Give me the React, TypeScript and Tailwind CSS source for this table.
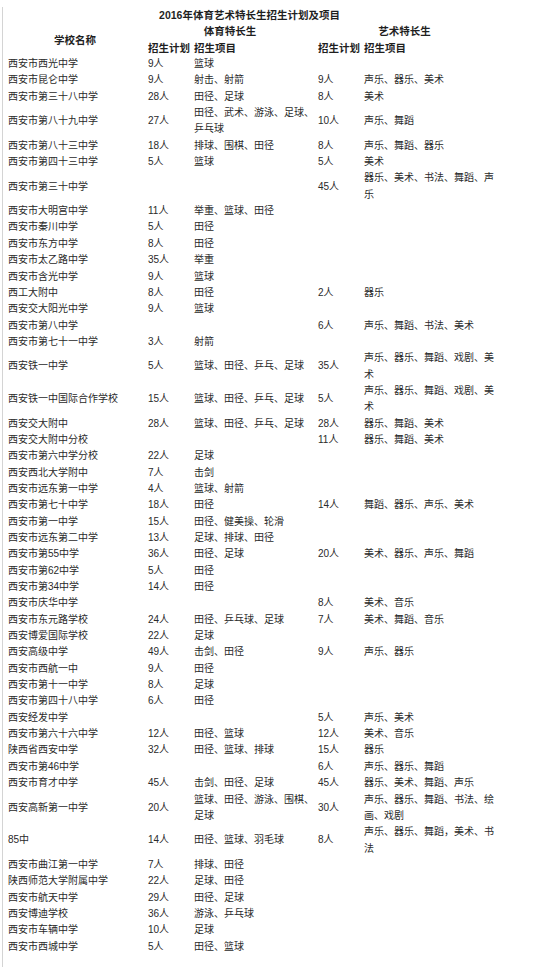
type Row = [string, string, string, string, string];

// 学校名称 | 体育计划 | 体育项目 | 艺术计划 | 艺术项目  ("\n" = forced wrap)
const rows: Row[] = [
  ['西安市西光中学', '9人', '篮球', '', ''],
  ['西安市昆仑中学', '9人', '射击、射箭', '9人', '声乐、器乐、美术'],
  ['西安市第三十八中学', '28人', '田径、足球', '8人', '美术'],
  ['西安市第八十九中学', '27人', '田径、武术、游泳、足球、\n乒乓球', '10人', '声乐、舞蹈'],
  ['西安市第八十三中学', '18人', '排球、围棋、田径', '8人', '声乐、舞蹈、器乐'],
  ['西安市第四十三中学', '5人', '篮球', '5人', '美术'],
  ['西安市第三十中学', '', '', '45人', '器乐、美术、书法、舞蹈、声\n乐'],
  ['西安市大明宫中学', '11人', '举重、篮球、田径', '', ''],
  ['西安市秦川中学', '5人', '田径', '', ''],
  ['西安市东方中学', '8人', '田径', '', ''],
  ['西安市太乙路中学', '35人', '举重', '', ''],
  ['西安市含光中学', '9人', '篮球', '', ''],
  ['西工大附中', '8人', '田径', '2人', '器乐'],
  ['西安交大阳光中学', '9人', '篮球', '', ''],
  ['西安市第八中学', '', '', '6人', '声乐、舞蹈、书法、美术'],
  ['西安市第七十一中学', '3人', '射箭', '', ''],
  ['西安铁一中学', '5人', '篮球、田径、乒乓、足球', '35人', '声乐、器乐、舞蹈、戏剧、美\n术'],
  ['西安铁一中国际合作学校', '15人', '篮球、田径、乒乓、足球', '5人', '声乐、器乐、舞蹈、戏剧、美\n术'],
  ['西安交大附中', '28人', '篮球、田径、乒乓、足球', '28人', '器乐、舞蹈、美术'],
  ['西安交大附中分校', '', '', '11人', '器乐、舞蹈、美术'],
  ['西安市第六中学分校', '22人', '足球', '', ''],
  ['西安西北大学附中', '7人', '击剑', '', ''],
  ['西安市远东第一中学', '4人', '篮球、射箭', '', ''],
  ['西安市第七十中学', '18人', '田径', '14人', '舞蹈、器乐、声乐、美术'],
  ['西安市第一中学', '15人', '田径、健美操、轮滑', '', ''],
  ['西安市远东第二中学', '13人', '足球、排球、田径', '', ''],
  ['西安市第55中学', '36人', '田径、足球', '20人', '美术、器乐、声乐、舞蹈'],
  ['西安市第62中学', '5人', '田径', '', ''],
  ['西安市第34中学', '14人', '田径', '', ''],
  ['西安市庆华中学', '', '', '8人', '美术、音乐'],
  ['西安市东元路学校', '24人', '田径、乒乓球、足球', '7人', '美术、舞蹈、音乐'],
  ['西安博爱国际学校', '22人', '足球', '', ''],
  ['西安高级中学', '49人', '击剑、田径', '9人', '声乐、器乐'],
  ['西安市西航一中', '9人', '田径', '', ''],
  ['西安市第十一中学', '8人', '足球', '', ''],
  ['西安市第四十八中学', '6人', '田径', '', ''],
  ['西安经发中学', '', '', '5人', '声乐、美术'],
  ['西安市第六十六中学', '12人', '田径、篮球', '12人', '美术、音乐'],
  ['陕西省西安中学', '32人', '田径、篮球、排球', '15人', '器乐'],
  ['西安市第46中学', '', '', '6人', '声乐、器乐、舞蹈'],
  ['西安市育才中学', '45人', '击剑、田径、足球', '45人', '器乐、美术、舞蹈、声乐'],
  ['西安高新第一中学', '20人', '篮球、田径、游泳、围棋、\n足球', '30人', '声乐、器乐、舞蹈、书法、绘\n画、戏剧'],
  ['85中', '14人', '田径、篮球、羽毛球', '8人', '声乐、器乐、舞蹈，美术、书\n法'],
  ['西安市曲江第一中学', '7人', '排球、田径', '', ''],
  ['陕西师范大学附属中学', '22人', '足球、田径', '', ''],
  ['西安市航天中学', '29人', '田径、足球', '', ''],
  ['西安博迪学校', '36人', '游泳、乒乓球', '', ''],
  ['西安市车辆中学', '10人', '足球', '', ''],
  ['西安市西城中学', '5人', '田径、篮球', '', ''],
];

const font = { fontFamily: '"Liberation Sans", "Noto Sans CJK SC", sans-serif' };

const App = () => {
  return (
    <div className="min-h-[967px] w-[550px] bg-white pt-[7px] pl-[2px]" style={font}>
      <div className="min-h-[960px] border-l border-[#d4d4d4] pl-[2px]">
        <table className="w-[489px] table-fixed border-collapse text-[#2a2a2a] text-[10px] leading-[16.35px]">
          <colgroup>
            <col className="w-[140px]" />
            <col className="w-[46px]" />
            <col className="w-[124px]" />
            <col className="w-[46px]" />
            <col className="w-[133px]" />
          </colgroup>
          <thead className="font-bold text-[10.5px] text-[#1f1f1f]">
            <tr>
              <th colSpan={5} className="p-0 text-center font-bold">
                2016年体育艺术特长生招生计划及项目
              </th>
            </tr>
            <tr>
              <th rowSpan={2} className="p-0 text-center align-middle font-bold">学校名称</th>
              <th colSpan={2} className="p-0 text-center font-bold">体育特长生</th>
              <th colSpan={2} className="p-0 text-center font-bold">艺术特长生</th>
            </tr>
            <tr>
              <th className="p-0 pl-[3px] text-left font-bold whitespace-nowrap">招生计划</th>
              <th className="p-0 pl-[3px] text-left font-bold">招生项目</th>
              <th className="p-0 pl-[3px] text-left font-bold whitespace-nowrap">招生计划</th>
              <th className="p-0 pl-[3px] text-left font-bold">招生项目</th>
            </tr>
          </thead>
          <tbody>
            {rows.map((r, i) => (
              <tr key={i}>
                {r.map((cell, j) => (
                  <td key={j} className="p-0 pl-[3px] align-middle whitespace-pre-line">
                    {cell}
                  </td>
                ))}
              </tr>
            ))}
          </tbody>
        </table>
      </div>
    </div>
  );
};

export default App;
